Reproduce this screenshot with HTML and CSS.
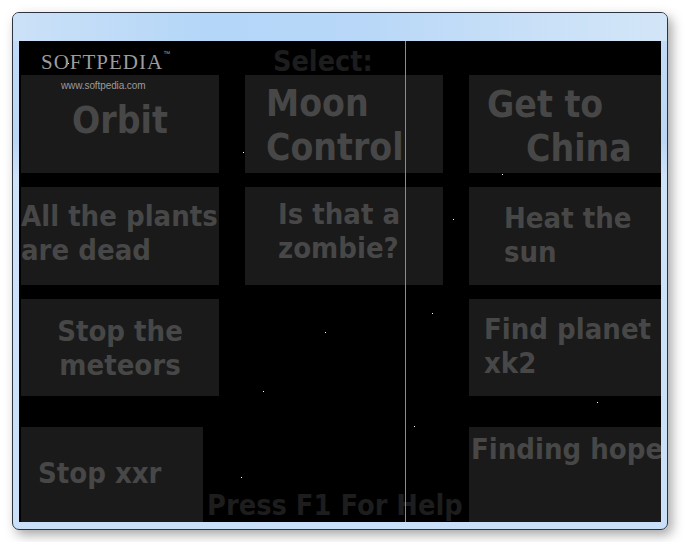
FILE: index.html
```html
<!DOCTYPE html>
<html lang="en">
<head>
  <meta charset="UTF-8" />
  <title>Select</title>
  <link rel="stylesheet" href="styles.css">
</head>
<body>
  <div class="window">
    <div class="titlebar"></div>
    <div class="client">
      <div class="select">Select:</div>

      <div class="grid">
        <div class="tile center big pad-orbit">Orbit</div>
        <div class="tile big pad-moon">Moon<br>Control</div>
        <div class="tile big pad-china"><span class="line">Get to</span><span class="line indent">China</span></div>

        <div class="tile pad-plants">All the plants<br>are dead</div>
        <div class="tile pad-zombie">Is that a<br>zombie?</div>
        <div class="tile pad-sun">Heat the<br>sun</div>

        <div class="tile center pad-meteors">Stop the<br>meteors</div>
        <div class="empty"></div>
        <div class="tile pad-planet">Find planet<br>xk2</div>

        <div class="tile last short pad-xxr">Stop xxr</div>
        <div class="empty"></div>
        <div class="tile last pad-hope">Finding hope</div>
      </div>

      <div class="help">Press F1 For Help</div>
      <div class="divider"></div>

      <div class="star" style="left:49px;top:22px"></div>
      <div class="star" style="left:224px;top:111px"></div>
      <div class="star" style="left:483px;top:133px"></div>
      <div class="star" style="left:434px;top:178px"></div>
      <div class="star" style="left:413px;top:272px"></div>
      <div class="star" style="left:306px;top:291px"></div>
      <div class="star" style="left:244px;top:350px"></div>
      <div class="star" style="left:578px;top:361px"></div>
      <div class="star" style="left:395px;top:385px"></div>
      <div class="star" style="left:222px;top:436px"></div>

      <div class="watermark">
        <div class="brand">SOFTPEDIA<sup>™</sup></div>
        <div class="url">www.softpedia.com</div>
      </div>
    </div>
  </div>
</body>
</html>
```

FILE: styles.css
```css
body {
  margin: 0;
  padding: 12px;
  background: #ffffff;
}
.window {
  width: 654px;
  height: 516px;
  border: 1px solid #2b3440;
  border-radius: 7px;
  background: linear-gradient(180deg, #c3dcf6 0%, #bcd7f5 25%, #cfe3f8 32%, #c9e0f8 100%);
  box-shadow: 4px 5px 12px rgba(0, 0, 0, 0.35);
  display: flex;
  flex-direction: column;
}
.titlebar {
  height: 28px;
  background: linear-gradient(90deg, #cbe1f7 0%, #b4d6f8 30%, #b9d8f8 55%, #c9e0f7 80%, #d3e6f8 100%);
  border-radius: 6px 6px 0 0;
}
.client {
  position: relative;
  margin: 0 6px 7px 6px;
  height: 481px;
  background: #000;
  overflow: hidden;
  font-family: "DejaVu Sans Condensed", "DejaVu Sans", sans-serif;
  font-stretch: condensed;
  font-weight: bold;
  color: #474747;
}
.select {
  height: 34px;
  box-sizing: border-box;
  padding: 6px 0 0 254px;
  font-size: 28.5px;
  line-height: 30px;
  color: #1d1d1d;
}
.grid {
  display: grid;
  grid-template-columns: repeat(3, 198px);
  grid-template-rows: 98px 98px 97px 113px;
  column-gap: 26px;
  row-gap: 14px;
  padding-left: 2px;
}
.tile {
  background: #1a1a1a;
  font-size: 29px;
  line-height: 34px;
  box-sizing: border-box;
  white-space: nowrap;
}
.tile.big {
  font-size: 37px;
  line-height: 44px;
}
.tile.center {
  text-align: center;
}
.tile.last {
  margin-top: 17px;
}
.tile.short {
  width: 182px;
}
.line {
  display: block;
}
.indent {
  padding-left: 39px;
}
.pad-orbit { padding-top: 24px; }
.pad-moon { padding: 7px 0 0 21px; }
.pad-china { padding: 8px 0 0 18px; }
.pad-plants { padding: 12px 0 0 0; }
.pad-zombie { padding: 10px 0 0 33px; }
.pad-sun { padding: 14px 0 0 35px; }
.pad-meteors { padding-top: 15px; }
.pad-planet { padding: 13px 0 0 15px; }
.pad-xxr { padding: 29px 0 0 17px; }
.pad-hope { padding: 5px 0 0 2px; }

.help {
  position: absolute;
  left: 188px;
  top: 447px;
  font-size: 28.7px;
  line-height: 34px;
  color: #1d1d1d;
}
.divider {
  position: absolute;
  left: 386px;
  top: 0;
  width: 1px;
  height: 100%;
  background: #8c8c8c;
}
.star {
  position: absolute;
  width: 1px;
  height: 1px;
  background: #fff;
}
.watermark {
  position: absolute;
  left: 22px;
  top: 1px;
  font-weight: normal;
}
.brand {
  font-family: "Liberation Serif", serif;
  font-size: 21px;
  letter-spacing: 1px;
  color: #9c9c9c;
  line-height: 24px;
}
.brand sup {
  font-family: "Liberation Sans", sans-serif;
  font-size: 7px;
  letter-spacing: 0;
  vertical-align: 13px;
}
.url {
  font-family: "Liberation Sans", sans-serif;
  font-size: 10px;
  letter-spacing: -0.1px;
  line-height: 12px;
  color: #9a9a9a;
  padding: 6px 0 0 20px;
}
```
